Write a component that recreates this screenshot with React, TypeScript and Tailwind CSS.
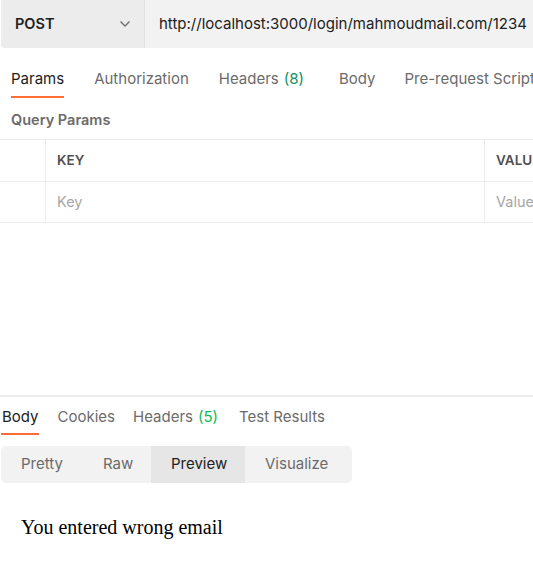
import React from "react";

export default function App() {
  return (
    <div
      className="w-[533px] h-[578px] overflow-hidden bg-white relative"
      style={{ fontFamily: "Inter, 'Liberation Sans', sans-serif" }}
    >
      {/* Request bar */}
      <div className="flex h-[48px] ml-[1px] w-[700px] rounded-bl-[4px] overflow-hidden">
        <div className="w-[144px] shrink-0 bg-[#ececec] flex items-center justify-between pl-[14px] pr-[13px] border-r border-[#e2e2e2]">
          <span className="text-[14.5px] font-semibold text-[#212121]">POST</span>
          <svg width="12" height="8" viewBox="0 0 12 8" fill="none">
            <path d="M1.5 1.5 L6 6 L10.5 1.5" stroke="#6b6b6b" strokeWidth="1.3" />
          </svg>
        </div>
        <div className="flex-1 bg-[#f2f2f2] flex items-center pl-[14px]">
          <span className="text-[15px] text-[#212121] whitespace-nowrap">
            http://localhost:3000/login/mahmoudmail.com/1234
          </span>
        </div>
      </div>

      {/* Request tabs */}
      <div className="flex h-[50px] pl-[11px] whitespace-nowrap text-[15px] leading-[20px]">
        <div className="relative pt-[21px]">
          <span className="text-[#212121]">Params</span>
          <div className="absolute left-0 right-0 bottom-0 h-[2px] bg-[#ff6c37]" />
        </div>
        <div className="pt-[21px] ml-[30px] text-[#6b6b6b]">Authorization</div>
        <div className="pt-[21px] ml-[30px] text-[#6b6b6b]">
          Headers<span className="ml-[5px] text-[#0f8f63]">(8)</span>
        </div>
        <div className="pt-[21px] ml-[35px] text-[#6b6b6b]">Body</div>
        <div className="pt-[21px] ml-[29px] text-[#6b6b6b]">Pre-request Script</div>
      </div>

      {/* Query Params */}
      <div className="h-[41px] flex items-center pl-[11px] pt-[3px]">
        <span className="text-[14.5px] font-semibold text-[#6b6b6b]">Query Params</span>
      </div>

      <div className="border-t border-[#ececec] w-[700px]">
        <div className="flex h-[42px] border-b border-[#ececec]">
          <div className="w-[46px] border-r border-[#ececec]" />
          <div className="w-[439px] border-r border-[#ececec] flex items-center pl-[11px]">
            <span className="text-[13.5px] font-semibold text-[#505050]">KEY</span>
          </div>
          <div className="flex items-center pl-[11px]">
            <span className="text-[13.5px] font-semibold text-[#505050]">VALUE</span>
          </div>
        </div>
        <div className="flex h-[41px] border-b border-[#ececec]">
          <div className="w-[46px] border-r border-[#ececec]" />
          <div className="w-[439px] border-r border-[#ececec] flex items-center pl-[11px] pb-[1px]">
            <span className="text-[14.5px] text-[#a6a6a6]">Key</span>
          </div>
          <div className="flex items-center pl-[11px] pb-[1px]">
            <span className="text-[14.5px] text-[#a6a6a6]">Value</span>
          </div>
        </div>
      </div>

      {/* Response */}
      <div className="mt-[172px] border-t-2 border-[#ececec]">
        <div className="flex h-[38px] whitespace-nowrap text-[15px] leading-[20px]">
          <div className="relative ml-[1px] pt-[10px]">
            <span className="text-[#212121] pl-[1px]">Body</span>
            <div className="absolute left-0 right-0 bottom-0 h-[2px] bg-[#ff6c37]" />
          </div>
          <div className="pt-[10px] ml-[19px] text-[#6b6b6b]">Cookies</div>
          <div className="pt-[10px] ml-[18px] text-[#6b6b6b]">
            Headers<span className="ml-[5px] text-[#0cbb52]">(5)</span>
          </div>
          <div className="pt-[10px] ml-[21px] text-[#6b6b6b]">Test Results</div>
        </div>

        <div className="mt-[11px] ml-[1px] w-[351px] h-[37px] bg-[#f2f2f2] rounded-[5px] flex overflow-hidden text-[15px]">
          <div className="w-[80px] flex items-center pl-[20px] text-[#6b6b6b]">Pretty</div>
          <div className="w-[70px] flex items-center pl-[22px] text-[#6b6b6b]">Raw</div>
          <div className="w-[94px] bg-[#e6e6e6] flex items-center pl-[20px] text-[#212121]">Preview</div>
          <div className="flex-1 flex items-center pl-[20px] text-[#6b6b6b]">Visualize</div>
        </div>

        <div
          className="mt-[32px] ml-[21px] text-[20px] leading-[24px] text-black"
          style={{ fontFamily: "'Liberation Serif', 'Times New Roman', serif" }}
        >
          You entered wrong email
        </div>
      </div>
    </div>
  );
}
